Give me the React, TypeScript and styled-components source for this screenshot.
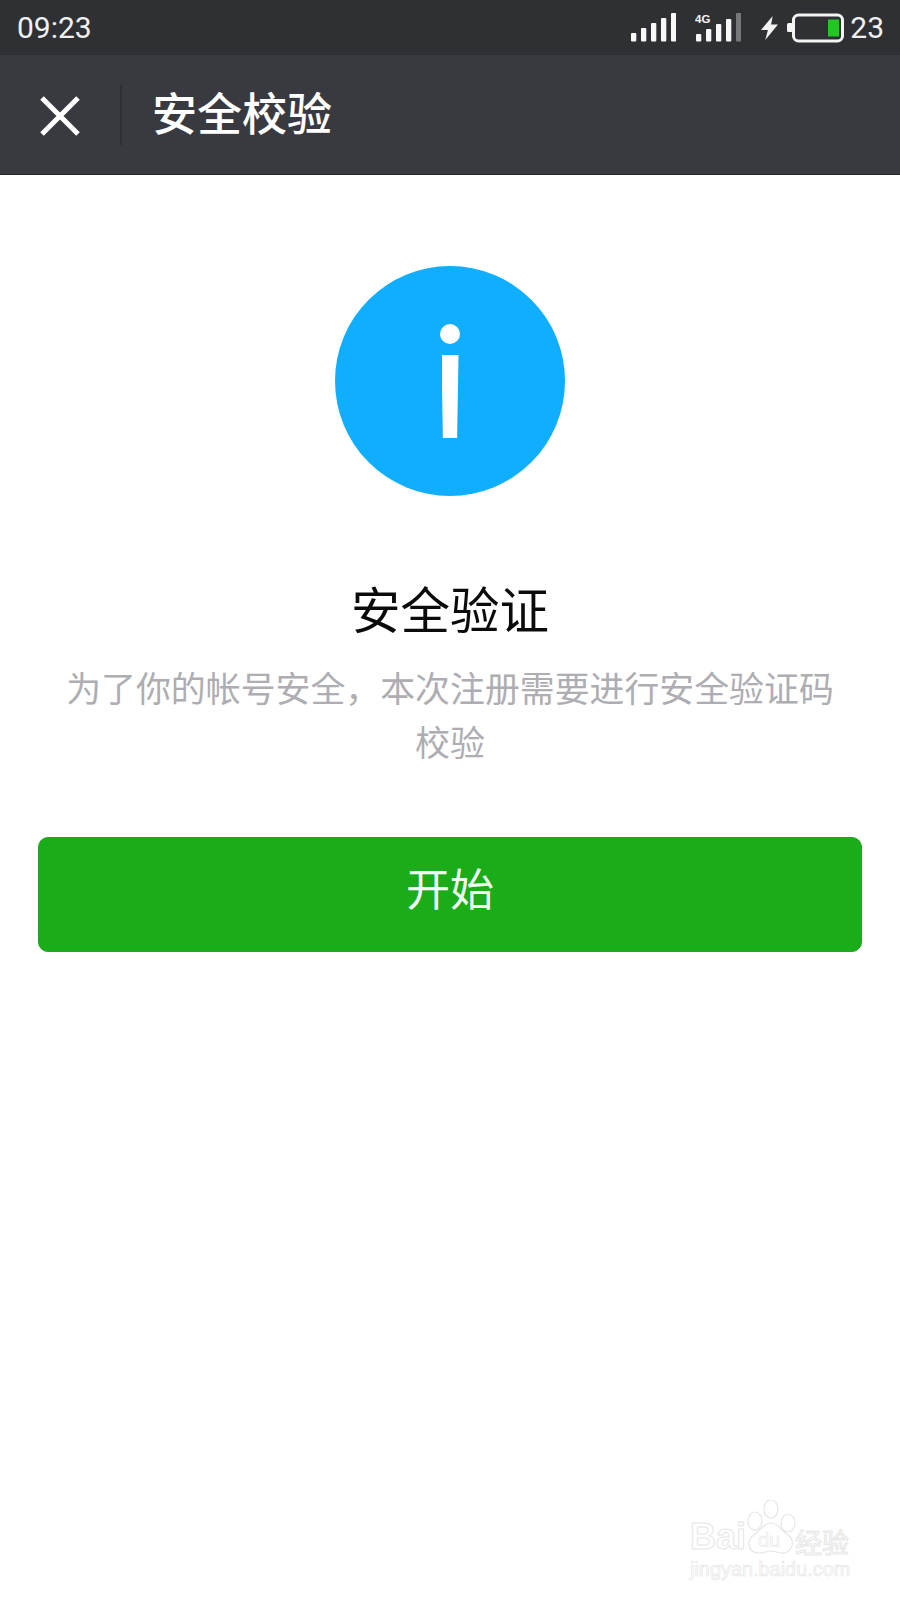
import React from 'react'
import styled, { createGlobalStyle } from 'styled-components'

const GlobalStyle = createGlobalStyle`
  html, body {
    margin: 0;
    padding: 0;
    background: #fff;
  }
  * {
    box-sizing: border-box;
  }
`

const cjk = `"Noto Sans CJK SC", "Noto Sans", sans-serif`

const Page = styled.div`
  position: relative;
  width: 900px;
  height: 1600px;
  overflow: hidden;
  background: #fff;
  font-family: ${cjk};
`

const StatusBar = styled.div`
  display: flex;
  align-items: center;
  justify-content: space-between;
  height: 55px;
  padding: 0 16px 0 17px;
  background: #2f3034;
  color: #f0f0f0;
  font-family: Roboto, sans-serif;
  font-size: 30px;
`

const StatusRight = styled.div`
  display: flex;
  align-items: center;
`

const StatusItem = styled.div<{ $gap: number }>`
  display: flex;
  margin-left: ${(p) => p.$gap}px;
`

const Header = styled.header`
  display: flex;
  align-items: center;
  height: 120px;
  background: #393a3f;
  border-bottom: 1px solid #26272a;
`

const CloseButton = styled.div`
  display: flex;
  width: 120px;
  margin-top: 2px;
  justify-content: center;
`

const Divider = styled.div`
  width: 2px;
  height: 60px;
  background: #2e2f33;
`

const HeaderTitle = styled.h1`
  margin: 0 0 6px 30px;
  color: #fff;
  font-size: 45px;
  font-weight: 500;
  line-height: 1;
`

const Main = styled.main`
  display: flex;
  flex-direction: column;
  align-items: center;
  padding: 91px 38px 0;
`

const InfoCircle = styled.div`
  display: flex;
  flex-direction: column;
  align-items: center;
  width: 230px;
  height: 230px;
  padding-top: 58px;
  border-radius: 50%;
  background: #10aeff;
`

const InfoDot = styled.div`
  width: 20px;
  height: 20px;
  border-radius: 50%;
  background: #fff;
`

const InfoStem = styled.div`
  width: 17px;
  height: 83px;
  margin-top: 11px;
  background: #fff;
  clip-path: polygon(0 0, 100% 0, 92% 100%, 8% 100%);
`

const Heading = styled.h2`
  margin: 81px 0 0;
  color: #0b0b0b;
  font-size: 49.5px;
  font-weight: 400;
  line-height: 62px;
`

const Description = styled.p`
  width: 790px;
  margin: 21px 0 0;
  color: #adadb2;
  font-size: 34.9px;
  font-weight: 400;
  line-height: 54px;
  text-align: center;
`

const StartButton = styled.button`
  display: block;
  width: 824px;
  height: 115px;
  margin-top: 69px;
  padding: 0 0 16px;
  border: 1px solid #24a323;
  border-radius: 10px;
  background: #1aad19;
  color: #f4fbf4;
  font-family: ${cjk};
  font-size: 44px;
  font-weight: 400;
`

const Watermark = styled.div`
  position: absolute;
  left: 690px;
  top: 1500px;
  width: 165px;
`

const WatermarkRow = styled.div`
  display: flex;
  align-items: flex-end;
  height: 55px;
`

const OutlineText = styled.span<{ $size: number; $latin?: boolean }>`
  color: #fff;
  -webkit-text-stroke: 1px #e6e6e6;
  font-family: ${(p) => (p.$latin ? `"Liberation Sans", sans-serif` : cjk)};
  font-size: ${(p) => p.$size}px;
  font-weight: ${(p) => (p.$latin ? 700 : 400)};
  line-height: 1;
  white-space: nowrap;
`

const PawIcon = styled.svg`
  flex: none;
  width: 50px;
  height: 55px;
  margin-right: -1px;
`

const WatermarkUrl = styled(OutlineText)`
  display: block;
  margin-top: 5px;
  font-weight: 400;
  -webkit-text-stroke-width: 0.7px;
`

function SignalBars({ label, dim }: { label?: boolean; dim?: boolean }) {
  const tops = [33, 28, 23, 18, 13]
  return (
    <svg width="46" height="33" viewBox="0 11 46 33" style={{ display: 'block' }}>
      {label && (
        <text x="0" y="23" fill="#f4f4f4" fontFamily="Liberation Sans, sans-serif" fontSize="11.5" fontWeight="700">
          4G
        </text>
      )}
      {tops.map((top, i) => (
        <rect
          key={i}
          x={1 + i * 10}
          y={label && i < 4 ? top + 1 : top}
          width="5.3"
          height={label && i < 4 ? 41.5 - top - 1 : 41.5 - top}
          rx="1"
          fill={dim && i === 4 ? '#77787b' : '#f8f8f8'}
        />
      ))}
    </svg>
  )
}

function Battery() {
  return (
    <svg width="60" height="34" viewBox="0 0 60 34" style={{ display: 'block' }}>
      <rect x="0" y="12" width="6" height="9" rx="1.5" fill="#f4f4f4" />
      <rect x="6.5" y="4" width="49" height="26" rx="5" fill="none" stroke="#f4f4f4" strokeWidth="3" />
      <rect x="41" y="8.5" width="11" height="17" fill="#21c822" />
    </svg>
  )
}

function Bolt() {
  return (
    <svg width="17" height="24" viewBox="0 0 16 24" preserveAspectRatio="none" style={{ display: 'block' }}>
      <path d="M11 0 L0 14 H6.5 L4 24 L16 8.5 H9.5 Z" fill="#f4f4f4" />
    </svg>
  )
}

export default function App() {
  return (
    <Page>
      <GlobalStyle />
      <StatusBar>
        <span>09:23</span>
        <StatusRight>
          <StatusItem $gap={0}><SignalBars /></StatusItem>
          <StatusItem $gap={19}><SignalBars label dim /></StatusItem>
          <StatusItem $gap={20}><Bolt /></StatusItem>
          <StatusItem $gap={9}><Battery /></StatusItem>
          <StatusItem $gap={3}>23</StatusItem>
        </StatusRight>
      </StatusBar>
      <Header>
        <CloseButton>
          <svg width="42" height="42" viewBox="0 0 42 42">
            <path d="M3 3 L39 39 M39 3 L3 39" stroke="#fff" strokeWidth="5" fill="none" />
          </svg>
        </CloseButton>
        <Divider />
        <HeaderTitle>安全校验</HeaderTitle>
      </Header>
      <Main>
        <InfoCircle>
          <InfoDot />
          <InfoStem />
        </InfoCircle>
        <Heading>安全验证</Heading>
        <Description>为了你的帐号安全，本次注册需要进行安全验证码校验</Description>
        <StartButton>开始</StartButton>
      </Main>
      <Watermark>
        <WatermarkRow>
          <OutlineText $size={36} $latin>Bai</OutlineText>
          <PawIcon viewBox="0 0 50 55" fill="#fff" stroke="#e6e6e6" strokeWidth="1.2">
            <ellipse cx="25" cy="9" rx="7" ry="9" />
            <ellipse cx="9" cy="21" rx="7" ry="9" />
            <ellipse cx="42" cy="23" rx="7" ry="9" />
            <path d="M25 23 C33 23 35 31 42 35 C50 41 46 54 35 53 C30 52.5 28 51 25 51 C21 51 18 53 13 53 C2 53 0 41 8 35 C15 31 17 23 25 23 Z" />
            <text x="12" y="47" fontFamily="Liberation Sans, sans-serif" fontSize="20" strokeWidth="0.6">du</text>
          </PawIcon>
          <OutlineText $size={27}>经验</OutlineText>
        </WatermarkRow>
        <WatermarkUrl $size={19.9} $latin>jingyan.baidu.com</WatermarkUrl>
      </Watermark>
    </Page>
  )
}
